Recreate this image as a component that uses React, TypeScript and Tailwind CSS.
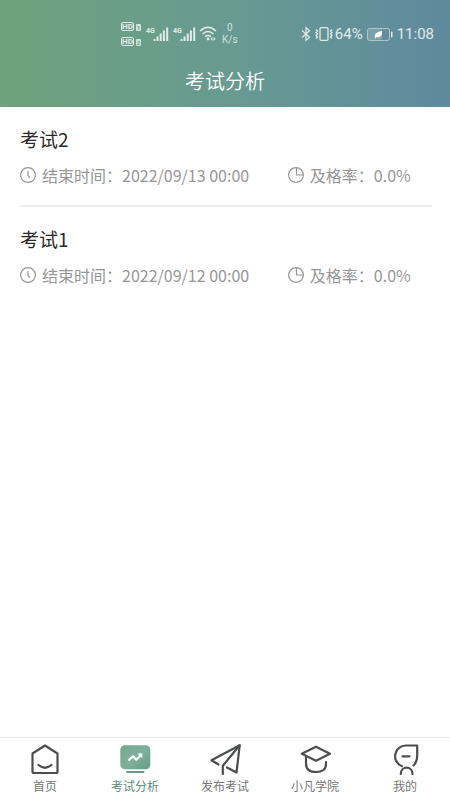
import type { ReactNode } from "react";

type Exam = { name: string; endTime: string; passRate: string };

const exams: Exam[] = [
  { name: "考试2", endTime: "2022/09/13 00:00", passRate: "0.0%" },
  { name: "考试1", endTime: "2022/09/12 00:00", passRate: "0.0%" },
];

function HdBadge({ sim }: { sim: string }) {
  return (
    <div className="flex h-[9px] items-end gap-[2px]">
      <span className="flex h-[9px] w-[13px] items-center justify-center rounded-[2px] border border-white/80 text-[8px] leading-none font-bold">
        HD
      </span>
      <span className="flex h-[7px] w-[5px] items-center justify-center rounded-[1px] bg-white/70 text-[6px] leading-none font-bold text-[#6a9d88]">
        {sim}
      </span>
    </div>
  );
}

function Signal() {
  return (
    <div className="flex h-[15px] items-start">
      <span className="w-[7px] text-[7px] leading-[8px] font-bold">4G</span>
      <svg className="h-[14px] w-[16px]" viewBox="0 0 16 14" fill="currentColor" aria-hidden="true">
        <rect x="0.5" y="12" width="2" height="2" />
        <rect x="3.5" y="9.5" width="2" height="4.5" />
        <rect x="6.7" y="6.5" width="2" height="7.5" />
        <rect x="9.9" y="3.5" width="2" height="10.5" />
        <rect x="13.2" y="0.5" width="2" height="13.5" />
      </svg>
    </div>
  );
}

function StatusBar() {
  return (
    <div className="flex h-9 items-center justify-between pr-4 pl-[121px] font-[Roboto,sans-serif] text-white/80">
      <div className="flex items-center">
        <div className="mr-[5px] flex flex-col gap-[6px]">
          <HdBadge sim="1" />
          <HdBadge sim="2" />
        </div>
        <Signal />
        <div className="ml-1">
          <Signal />
        </div>
        <svg className="ml-[3px] h-4 w-[18px]" viewBox="0 0 18 16" fill="none" stroke="currentColor" strokeWidth="1.5" aria-hidden="true">
          <path d="M1 5Q9-2.5 17 5" />
          <path d="M3.5 8Q9 3 14.5 8" />
          <path d="M6 10.7Q9 8.2 12 10.7" />
          <circle cx="9" cy="13" r="1.4" fill="currentColor" stroke="none" />
          <path d="M13.4 11v4l-2-2zM14.6 11v4l2-2z" fill="currentColor" stroke="none" />
        </svg>
        <div className="ml-[5px] flex flex-col items-center text-[10px] leading-[12px] text-white/70">
          <span>0</span>
          <span>K/s</span>
        </div>
      </div>
      <div className="flex items-center text-[15px] leading-none">
        <svg className="h-4 w-[10px]" viewBox="0 0 10 16" fill="none" stroke="currentColor" strokeWidth="1.2" aria-hidden="true">
          <path d="M1 4.5l7.5 6.8L5 14.5v-13l3.5 3.2L1 11.5" />
        </svg>
        <svg className="ml-1 h-4 w-[18px]" viewBox="0 0 18 16" fill="none" stroke="currentColor" strokeWidth="1.3" aria-hidden="true">
          <rect x="5" y="1.7" width="8" height="12.6" rx="1" />
          <path d="M1 3.5l1.5 1.5L1 6.5 2.5 8 1 9.5 2.5 11 1 12.5M17 3.5L15.5 5 17 6.5 15.5 8 17 9.5 15.5 11l1.5 1.5" />
        </svg>
        <span className="ml-[2px]">64%</span>
        <svg className="ml-1 h-[13px] w-[26px]" viewBox="0 0 26 13" fill="none" aria-hidden="true">
          <rect x="0.5" y="0.5" width="22" height="12" rx="2" stroke="currentColor" strokeOpacity="0.6" />
          <rect x="1" y="1" width="14" height="11" rx="1.5" fill="currentColor" fillOpacity="0.2" />
          <path d="M8 10Q7 6 10 4.5T15 3Q15.5 7 13.5 8.5T9.5 9L8.5 10.5z" fill="#fff" />
          <rect x="24" y="3.5" width="1.5" height="6" rx="0.7" fill="currentColor" />
        </svg>
        <span className="ml-1">11:08</span>
      </div>
    </div>
  );
}

function ExamItem({ exam }: { exam: Exam }) {
  return (
    <li className="border-b-2 border-[#ebebeb] pt-[18px] pb-[18px] last:border-transparent">
      <h2 className="text-[19px] leading-7 text-[#2a2a2a]">{exam.name}</h2>
      <div className="mt-[10px] flex h-6 items-center text-base leading-6 text-[#979797]">
        <div className="flex w-[65%] items-center gap-[6px]">
          <svg className="size-4 shrink-0" viewBox="0 0 16 16" fill="none" stroke="currentColor" strokeWidth="1.2" aria-hidden="true">
            <circle cx="8" cy="8" r="7.4" />
            <path d="M8 4v4.5l2 2.5" />
          </svg>
          <span className="whitespace-nowrap">结束时间：{exam.endTime}</span>
        </div>
        <div className="flex items-center gap-[6px]">
          <svg className="size-4 shrink-0" viewBox="0 0 16 16" fill="none" stroke="currentColor" strokeWidth="1.2" aria-hidden="true">
            <circle cx="8" cy="8" r="7.4" />
            <path d="M8.5 0.5V8H15.5" />
          </svg>
          <span className="whitespace-nowrap">及格率：{exam.passRate}</span>
        </div>
      </div>
    </li>
  );
}

const tabs: { label: string; active?: boolean; icon: ReactNode }[] = [
  {
    label: "首页",
    icon: (
      <>
        <path d="M16 2.5L28.5 10.5V28.5Q28.5 30 27 30H5Q3.5 30 3.5 28.5V10.5Z" />
        <path d="M9.5 22Q16 27.5 22.5 22" />
      </>
    ),
  },
  {
    label: "考试分析",
    active: true,
    icon: (
      <>
        <defs>
          <linearGradient id="screen" x1="0" y1="0" x2="1" y2="1">
            <stop offset="0" stopColor="#72a78f" />
            <stop offset="0.5" stopColor="#80b09d" />
            <stop offset="1" stopColor="#689b84" />
          </linearGradient>
        </defs>
        <rect x="1.3" y="2.3" width="30" height="24" rx="4.5" fill="url(#screen)" stroke="none" />
        <path d="M8 29H24.5" stroke="#6a9b86" />
        <path d="M10 16.8L14 13.3L17.3 16.8L22 12" stroke="#fff" />
        <path d="M18.5 10.5H23.3V15.2Z" fill="#fff" stroke="none" />
      </>
    ),
  },
  {
    label: "发布考试",
    icon: (
      <>
        <path d="M9.5 21.5L2.5 17.3L30.7 2.3L27.5 29.5L18 24.5" />
        <path d="M30.7 2.3L13.8 22.8V31" />
      </>
    ),
  },
  {
    label: "小凡学院",
    icon: (
      <>
        <path d="M17 3.7L31 10.7L17 17.7L2.8 10.7Z" />
        <path d="M7 13.5V20.5Q7 29 17 29T27 21V19" />
      </>
    ),
  },
  {
    label: "我的",
    icon: (
      <>
        <path d="M13 23.2A10.7 10.7 0 0 1 17 2.5H28.2V13Q28.2 19 24.5 22.5" />
        <path d="M13.5 13.3H20.5" />
        <path d="M11.8 31C11.8 22.5 23.5 22.5 23.5 31" />
      </>
    ),
  },
];

function TabBar() {
  return (
    <nav className="sticky bottom-0 grid grid-cols-5 border-t border-[#e9e9e9] bg-white">
      {tabs.map((tab) => (
        <a
          key={tab.label}
          href="#"
          aria-current={tab.active ? "page" : undefined}
          className={`flex flex-col items-center gap-[3px] pt-[5px] pb-[6px] text-xs leading-4 ${
            tab.active ? "text-[#5b8f79]" : "text-[#777777]"
          }`}
        >
          <svg
            className="size-8 text-[#4b4d50]"
            viewBox="0 0 32 32"
            fill="none"
            stroke="currentColor"
            strokeWidth="2.2"
            strokeLinecap="round"
            strokeLinejoin="round"
            aria-hidden="true"
          >
            {tab.icon}
          </svg>
          <span>{tab.label}</span>
        </a>
      ))}
    </nav>
  );
}

export default function App() {
  return (
    <div className="flex min-h-screen flex-col bg-white font-['Noto_Sans_CJK_SC',sans-serif]">
      <header className="bg-linear-to-r from-[#6fa17b] via-[#689b91] to-[#5f899d] pt-4">
        <StatusBar />
        <h1 className="pt-[14px] pb-[11px] text-center text-xl leading-[30px] font-[350] text-white">考试分析</h1>
      </header>
      <main className="flex-1 pr-[18px] pl-5">
        <ul>
          {exams.map((exam) => (
            <ExamItem key={exam.name} exam={exam} />
          ))}
        </ul>
      </main>
      <TabBar />
    </div>
  );
}
